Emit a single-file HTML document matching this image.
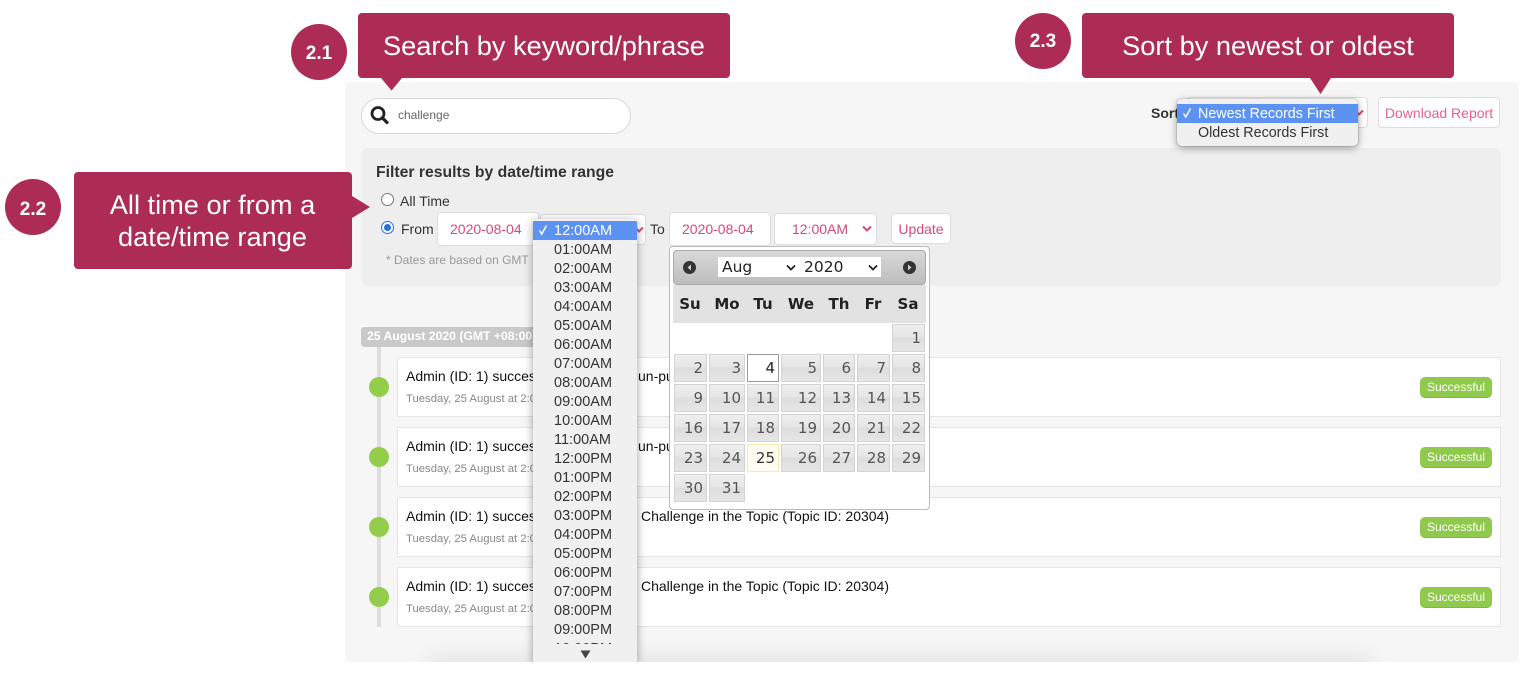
<!DOCTYPE html>
<html><head><meta charset="utf-8"><style>
html,body{margin:0;padding:0;background:#fff}
body{width:1534px;height:675px;position:relative;overflow:hidden;font-family:"Liberation Sans",sans-serif}
div,span{position:absolute;box-sizing:border-box;white-space:nowrap}
.c{background:#ad2c55;border-radius:4px;color:#fff;font-size:27.200px;text-align:center}
.o{background:#ad2c55;border-radius:50%;width:56px;height:56px;color:#fff;font-weight:bold;font-size:19px;line-height:56px;text-align:center}
.f{background:#fff;border:1px solid #ddd;border-radius:4px;color:#d9487a;font-size:14px}
.row{left:397px;width:1104px;height:60px;background:#fff;border:1px solid #e4e4e4}
.t1{left:8px;top:10px;font-size:14px;color:#111;line-height:17px}
.t2{left:8px;top:34px;font-size:11.300px;color:#888;line-height:14px}
.t3{top:10px;font-size:14px;color:#111;line-height:17px}
.b{left:1022px;top:19px;width:72px;height:21px;background:#90ca4c;border-radius:5px;color:#fff;font-size:12px;line-height:20px;text-align:center;border-bottom:1px solid #80b83f}
.d{left:369px;width:20px;height:20px;border-radius:50%;background:#94cc4b}
.dd{left:21px;font-size:14.500px;color:#333;line-height:19px;margin-top:1px}
.w{font-family:"DejaVu Sans",sans-serif;font-weight:bold;font-size:15px;color:#222;top:296px;line-height:17px;width:40px;text-align:center}
.n{font-family:"DejaVu Sans",sans-serif;font-size:15px;color:#555;border:1px solid #d3d3d3;background:linear-gradient(#eee 0,#e6e6e6 45%,#ddd 50%,#e6e6e6 100%);height:28px;line-height:27px;text-align:right;padding-right:3px}
.a{left:674px;width:33px}.b2{left:709px;width:36px}.cc{left:747px;width:32px}.e{left:781px;width:40px}.g{left:823px;width:32px}.h{left:857px;width:33px}.i{left:892px;width:33px}
.r1{top:324px}.r2{top:354px}.r3{top:384px}.r4{top:414px}.r5{top:444px}.r6{top:474px}
</style></head><body>

<div style="left:345px;top:82px;width:1174px;height:580px;background:#f6f6f6"></div>
<div style="left:430px;top:664px;width:940px;height:8px;box-shadow:0 0 24px 3px rgba(0,0,0,.12)"></div>

<div style="left:361px;top:98px;width:270px;height:36px;background:#fff;border:1px solid #d8d8d8;border-radius:18px"></div>
<svg style="position:absolute;left:368px;top:104px" width="24" height="24" viewBox="0 0 24 24"><circle cx="10" cy="9.500" r="6" fill="none" stroke="#222" stroke-width="2.800"/><path d="M14.500 14l4.500 4.500" stroke="#222" stroke-width="3.200" stroke-linecap="round"/></svg>
<div style="left:398px;top:108px;font-size:12px;color:#666;line-height:15px">challenge</div>

<div style="left:361px;top:148px;width:1140px;height:138px;background:#eee;border-radius:7px"></div>
<div style="left:376px;top:163px;font-size:16px;font-weight:bold;color:#333;line-height:19px;transform-origin:left;transform:scaleX(.984)">Filter results by date/time range</div>
<div style="left:381px;top:193px;width:13px;height:13px;border-radius:50%;background:#fff;border:1px solid #777"></div>
<div style="left:400px;top:193px;font-size:14px;color:#333;line-height:16px">All Time</div>
<div style="left:381px;top:221px;width:13px;height:13px;border-radius:50%;background:#fff;border:1.500px solid #2a6fe0"></div>
<div style="left:384px;top:224px;width:7px;height:7px;border-radius:50%;background:#2a6fe0"></div>
<div style="left:401px;top:221px;font-size:14px;color:#333;line-height:16px">From</div>
<div class="f" style="left:437px;top:212px;width:102px;height:34px;line-height:32px;padding-left:12px">2020-08-04</div>
<div class="f" style="left:540px;top:214px;width:106px;height:31px"></div>
<svg style="position:absolute;left:634px;top:226px" width="10" height="8" viewBox="0 0 10 8"><path d="M1 1.500l4 4 4-4" fill="none" stroke="#d9487a" stroke-width="2"/></svg>
<div style="left:650px;top:221px;font-size:14px;color:#333;line-height:16px">To</div>
<div class="f" style="left:669px;top:212px;width:102px;height:34px;line-height:32px;padding-left:12px">2020-08-04</div>
<div class="f" style="left:774px;top:213px;width:103px;height:32px;line-height:30px;padding-left:17px">12:00AM</div>
<svg style="position:absolute;left:862px;top:225px" width="10" height="8" viewBox="0 0 10 8"><path d="M1 1.500l4 4 4-4" fill="none" stroke="#d9487a" stroke-width="2"/></svg>
<div class="f" style="left:891px;top:213px;width:60px;height:31px;line-height:30px;text-align:center">Update</div>
<div style="left:386px;top:253px;font-size:12px;color:#999;line-height:15px">* Dates are based on GMT</div>

<div style="left:1151px;top:105px;font-size:14px;font-weight:bold;color:#333;line-height:16px">Sort</div>
<div class="f" style="left:1187px;top:97px;width:181px;height:31px"></div>
<svg style="position:absolute;left:1354px;top:109px" width="10" height="8" viewBox="0 0 10 8"><path d="M1 1.500l4 4 4-4" fill="none" stroke="#d9487a" stroke-width="2"/></svg>
<div class="f" style="left:1378px;top:97px;width:122px;height:31px;line-height:30px;text-align:center;color:#e8608d">Download Report</div>

<div style="left:361px;top:327px;width:190px;height:20px;background:#c9c9c9;border-radius:4px;color:#fff;font-size:12.200px;font-weight:bold;line-height:18px;padding-left:6px">25 August 2020 (GMT +08:00)</div>
<div style="left:377px;top:347px;width:4px;height:280px;background:#dedede"></div>

<div class="row" style="top:357px"><div class="t1">Admin (ID: 1) successfully</div><div class="t2">Tuesday, 25 August at 2:00</div><div class="t3" style="left:240px">un-pu</div><div class="b">Successful</div></div>
<div class="row" style="top:427px"><div class="t1">Admin (ID: 1) successfully</div><div class="t2">Tuesday, 25 August at 2:00</div><div class="t3" style="left:240px">un-pu</div><div class="b">Successful</div></div>
<div class="row" style="top:497px"><div class="t1">Admin (ID: 1) successfully</div><div class="t2">Tuesday, 25 August at 2:00</div><div class="t3" style="left:243px">Challenge in the Topic (Topic ID: 20304)</div><div class="b">Successful</div></div>
<div class="row" style="top:567px"><div class="t1">Admin (ID: 1) successfully</div><div class="t2">Tuesday, 25 August at 2:00</div><div class="t3" style="left:243px">Challenge in the Topic (Topic ID: 20304)</div><div class="b">Successful</div></div>
<div class="d" style="top:377px"></div><div class="d" style="top:447px"></div><div class="d" style="top:517px"></div><div class="d" style="top:587px"></div>

<!-- calendar -->
<div style="left:669px;top:246px;width:261px;height:264px;background:#fff;border:1px solid #bbb;border-radius:4px"></div>
<div style="left:673px;top:250px;width:253px;height:35px;background:linear-gradient(#d8d8d8,#bdbdbd);border:1px solid #aaa;border-radius:4px"></div>
<div style="left:683px;top:261px;width:13px;height:13px;border-radius:50%;background:#333"></div>
<svg style="position:absolute;left:683px;top:261px" width="13" height="13"><path d="M8 3.500L4.500 6.500 8 9.500z" fill="#ccc"/></svg>
<div style="left:903px;top:261px;width:13px;height:13px;border-radius:50%;background:#333"></div>
<svg style="position:absolute;left:903px;top:261px" width="13" height="13"><path d="M5 3.500L8.500 6.500 5 9.500z" fill="#ccc"/></svg>
<div style="left:718px;top:257px;width:163px;height:20px;background:#fff"></div>
<div style="left:722px;top:258px;font-family:'DejaVu Sans',sans-serif;font-size:15.500px;color:#222;line-height:19px">Aug</div>
<div style="left:804px;top:258px;font-family:'DejaVu Sans',sans-serif;font-size:15.500px;color:#222;line-height:19px">2020</div>
<svg style="position:absolute;left:786px;top:264px" width="10" height="8"><path d="M1 1.500l4 4 4-4" fill="none" stroke="#222" stroke-width="1.800"/></svg>
<svg style="position:absolute;left:868px;top:264px" width="10" height="8"><path d="M1 1.500l4 4 4-4" fill="none" stroke="#222" stroke-width="1.800"/></svg>
<div style="left:673px;top:285px;width:253px;height:38px;background:#e2e2e2"></div>
<div class="w" style="left:670px">Su</div><div class="w" style="left:707px">Mo</div><div class="w" style="left:743px">Tu</div><div class="w" style="left:781px">We</div><div class="w" style="left:819px">Th</div><div class="w" style="left:853px">Fr</div><div class="w" style="left:888px">Sa</div>

<div class="n i r1">1</div>
<div class="n a r2">2</div><div class="n b2 r2">3</div><div class="n cc r2" style="background:#fff;border-color:#999;color:#222">4</div><div class="n e r2">5</div><div class="n g r2">6</div><div class="n h r2">7</div><div class="n i r2">8</div>
<div class="n a r3">9</div><div class="n b2 r3">10</div><div class="n cc r3">11</div><div class="n e r3">12</div><div class="n g r3">13</div><div class="n h r3">14</div><div class="n i r3">15</div>
<div class="n a r4">16</div><div class="n b2 r4">17</div><div class="n cc r4">18</div><div class="n e r4">19</div><div class="n g r4">20</div><div class="n h r4">21</div><div class="n i r4">22</div>
<div class="n a r5">23</div><div class="n b2 r5">24</div><div class="n cc r5" style="background:#fffdf2;border-color:#f4ecb0;color:#333">25</div><div class="n e r5">26</div><div class="n g r5">27</div><div class="n h r5">28</div><div class="n i r5">29</div>
<div class="n a r6">30</div><div class="n b2 r6">31</div>

<!-- time dropdown -->
<div style="left:533px;top:219px;width:104px;height:443px;background:#f0f0f0;border-radius:4px 4px 0 0;box-shadow:0 2px 9px rgba(0,0,0,.38);overflow:hidden">
<div style="left:0;top:2px;width:104px;height:19px;background:#5c93f3"></div>
<svg style="position:absolute;left:5px;top:5px" width="11" height="12" viewBox="0 0 11 12"><path d="M1.500 6.500l2.300 3.500L8.500 1.500" fill="none" stroke="#fff" stroke-width="1.500"/></svg>
<div class="dd" style="top:2px;color:#fff">12:00AM</div>
<div class="dd" style="top:21px">01:00AM</div>
<div class="dd" style="top:40px">02:00AM</div>
<div class="dd" style="top:59px">03:00AM</div>
<div class="dd" style="top:78px">04:00AM</div>
<div class="dd" style="top:97px">05:00AM</div>
<div class="dd" style="top:116px">06:00AM</div>
<div class="dd" style="top:135px">07:00AM</div>
<div class="dd" style="top:154px">08:00AM</div>
<div class="dd" style="top:173px">09:00AM</div>
<div class="dd" style="top:192px">10:00AM</div>
<div class="dd" style="top:211px">11:00AM</div>
<div class="dd" style="top:230px">12:00PM</div>
<div class="dd" style="top:249px">01:00PM</div>
<div class="dd" style="top:268px">02:00PM</div>
<div class="dd" style="top:287px">03:00PM</div>
<div class="dd" style="top:306px">04:00PM</div>
<div class="dd" style="top:325px">05:00PM</div>
<div class="dd" style="top:344px">06:00PM</div>
<div class="dd" style="top:363px">07:00PM</div>
<div class="dd" style="top:382px">08:00PM</div>
<div class="dd" style="top:401px">09:00PM</div>
<div class="dd" style="top:420px">10:00PM</div>
<div style="left:0;top:425px;width:104px;height:18px;background:#f0f0f0"></div>
<svg style="position:absolute;left:47px;top:431px" width="11" height="9"><path d="M0.500 0.500h10L5.500 8.500z" fill="#444"/></svg>
</div>
<div style="left:0;top:662px;width:1534px;height:13px;background:#fff"></div>

<!-- sort dropdown -->
<div style="left:1177px;top:99px;width:181px;height:47px;background:#f0f0f0;border-radius:5px;box-shadow:0 0 0 1px rgba(0,0,0,.08),0 2px 8px rgba(0,0,0,.38);overflow:hidden">
<div style="left:0;top:5px;width:181px;height:19px;background:#5c93f3"></div>
<svg style="position:absolute;left:5px;top:8px" width="11" height="12" viewBox="0 0 11 12"><path d="M1.500 6.500l2.300 3.500L8.500 1.500" fill="none" stroke="#fff" stroke-width="1.500"/></svg>
<div style="left:21px;top:6px;color:#fff;font-size:14.300px;line-height:19px">Newest Records First</div>
<div style="left:21px;top:25px;color:#333;font-size:14.300px;line-height:19px">Oldest Records First</div>
</div>

<!-- callouts -->
<div class="o" style="left:291px;top:24px;line-height:59px">2.1</div>
<div class="c" style="left:358px;top:13px;width:372px;height:65px;line-height:66px">Search by keyword/phrase</div>
<svg style="position:absolute;left:381px;top:78px" width="22" height="13"><path d="M0 0h21L10.500 12.500z" fill="#ad2c55"/></svg>

<div class="o" style="left:5px;top:179px;line-height:62px">2.2</div>
<div class="c" style="left:74px;top:172px;width:278px;height:97px;line-height:32px;padding:17px 1px 0 0">All time or from a<br>date/time range</div>
<svg style="position:absolute;left:352px;top:196px" width="19" height="22"><path d="M0 0v22L18 11z" fill="#ad2c55"/></svg>

<div class="o" style="left:1015px;top:13px;line-height:58px">2.3</div>
<div class="c" style="left:1082px;top:13px;width:372px;height:65px;line-height:66px">Sort by newest or oldest</div>
<svg style="position:absolute;left:1310px;top:78px" width="22" height="17"><path d="M0 0h21L10.500 16z" fill="#ad2c55"/></svg>

</body></html>
